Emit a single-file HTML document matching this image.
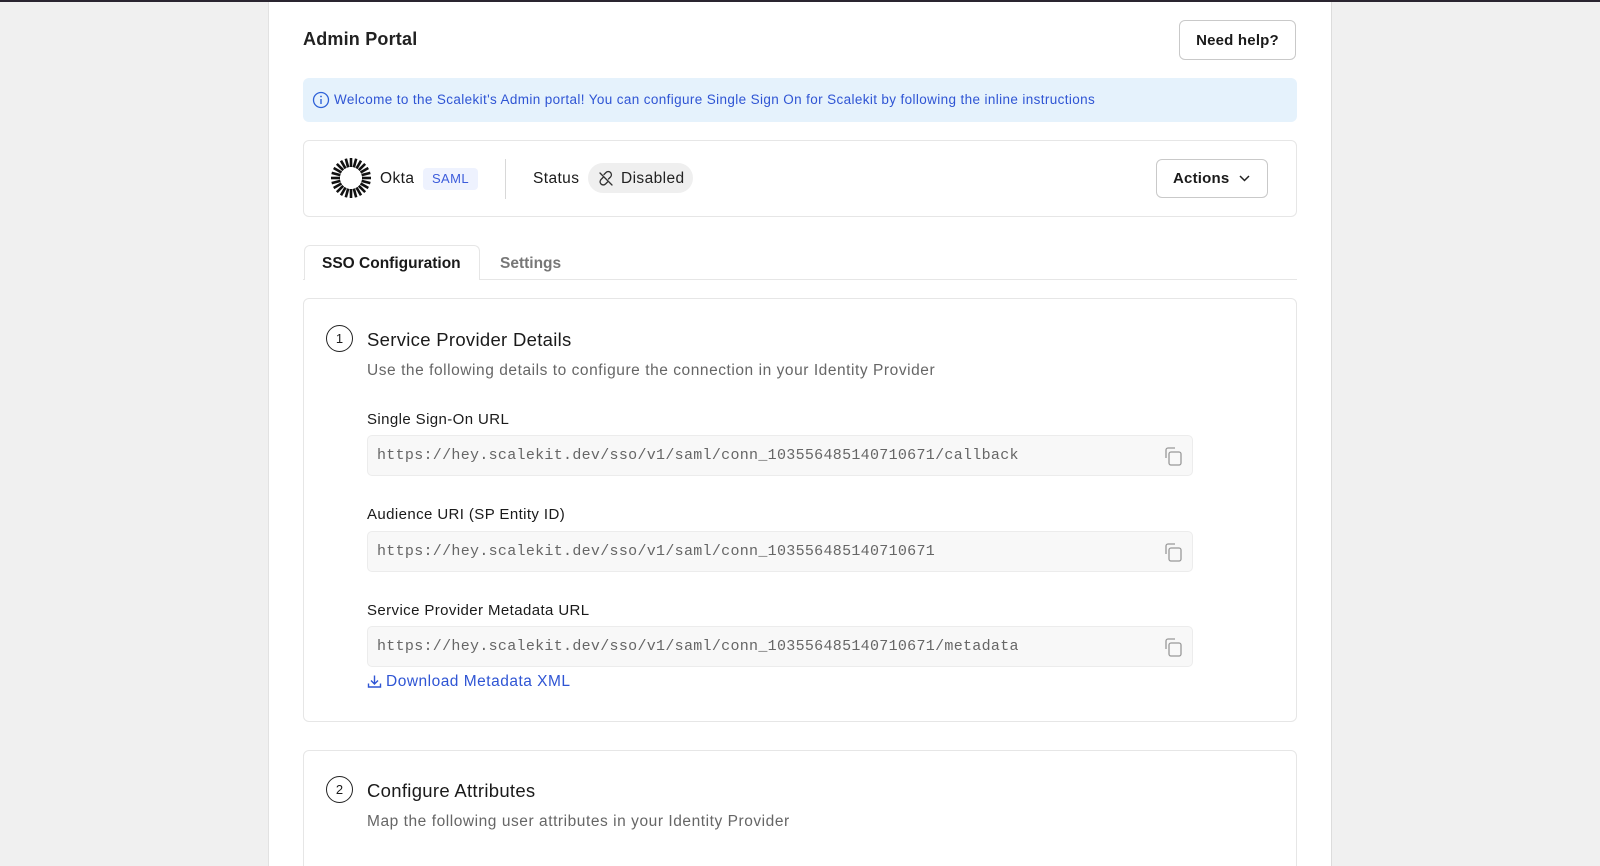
<!DOCTYPE html>
<html><head><meta charset="utf-8"><style>
*{box-sizing:border-box;margin:0;padding:0}
html,body{width:1600px;height:866px;overflow:hidden}
body{background:#f0f0f0;font-family:"Liberation Sans",sans-serif;color:#1a1a1a;position:relative}
.top{position:absolute;left:0;top:0;width:1600px;height:2px;background:#2a2530}
.panel{position:absolute;left:268px;top:2px;width:1064px;height:864px;background:#fff;border-left:1px solid #e2e2e2;border-right:1px solid #dcdcdc}
.a{position:absolute;white-space:nowrap}
.btn{position:absolute;border:1px solid #c9c9c9;border-radius:6px;background:#fff;font-weight:bold;font-size:15px;display:flex;align-items:center;justify-content:center;letter-spacing:0.2px}
.card{position:absolute;left:303px;width:994px;border:1px solid #e6e6e6;border-radius:6px;background:#fff}
.inp{position:absolute;left:367px;width:826px;height:41px;background:#f8f8f8;border:1px solid #ececec;border-radius:5px;font-family:"Liberation Mono",monospace;font-size:15px;color:#666;line-height:39px;padding-left:9px;letter-spacing:0.3px}
.lbl{position:absolute;left:367px;font-size:15px;color:#1a1a1a;letter-spacing:0.4px}
.num{position:absolute;width:27px;height:27px;border:1.3px solid #222;border-radius:50%;font-size:13px;text-align:center;line-height:25px}
.h{position:absolute;left:367px;font-size:18.5px;letter-spacing:0.3px}
.sub{position:absolute;left:367px;font-size:15.5px;color:#666;letter-spacing:0.55px}
</style></head><body>
<div class="top"></div>
<div class="panel"></div>
<div class="a" style="left:303px;top:29px;font-size:18px;font-weight:bold;color:#222;letter-spacing:0.2px">Admin Portal</div>
<div class="btn" style="left:1179px;top:20px;width:117px;height:40px">Need help?</div>
<div class="a" style="left:303px;top:78px;width:994px;height:44px;background:#e5f2fc;border-radius:6px"></div>
<svg class="a" style="left:312px;top:91px" width="18" height="18" viewBox="0 0 18 18"><circle cx="9" cy="9" r="7.5" fill="none" stroke="#2f62d8" stroke-width="1.3"/><line x1="9" y1="8" x2="9" y2="13" stroke="#2f62d8" stroke-width="1.4"/><circle cx="9" cy="5.5" r="0.9" fill="#2f62d8"/></svg>
<div class="a" style="left:334px;top:92px;font-size:13.5px;color:#2f55d4;letter-spacing:0.37px">Welcome to the Scalekit's Admin portal! You can configure Single Sign On for Scalekit by following the inline instructions</div>
<div class="card" style="top:140px;height:77px"></div>
<svg class="a" style="left:330px;top:157px" width="42" height="42" viewBox="-21 -21 42 42">
<g stroke="#111" stroke-width="2.6" stroke-linecap="butt">
<line x1="0" y1="-11" x2="0" y2="-20" transform="rotate(0)"/><line x1="0" y1="-11" x2="0" y2="-20" transform="rotate(15)"/><line x1="0" y1="-11" x2="0" y2="-20" transform="rotate(30)"/><line x1="0" y1="-11" x2="0" y2="-20" transform="rotate(45)"/><line x1="0" y1="-11" x2="0" y2="-20" transform="rotate(60)"/><line x1="0" y1="-11" x2="0" y2="-20" transform="rotate(75)"/><line x1="0" y1="-11" x2="0" y2="-20" transform="rotate(90)"/><line x1="0" y1="-11" x2="0" y2="-20" transform="rotate(105)"/><line x1="0" y1="-11" x2="0" y2="-20" transform="rotate(120)"/><line x1="0" y1="-11" x2="0" y2="-20" transform="rotate(135)"/><line x1="0" y1="-11" x2="0" y2="-20" transform="rotate(150)"/><line x1="0" y1="-11" x2="0" y2="-20" transform="rotate(165)"/><line x1="0" y1="-11" x2="0" y2="-20" transform="rotate(180)"/><line x1="0" y1="-11" x2="0" y2="-20" transform="rotate(195)"/><line x1="0" y1="-11" x2="0" y2="-20" transform="rotate(210)"/><line x1="0" y1="-11" x2="0" y2="-20" transform="rotate(225)"/><line x1="0" y1="-11" x2="0" y2="-20" transform="rotate(240)"/><line x1="0" y1="-11" x2="0" y2="-20" transform="rotate(255)"/><line x1="0" y1="-11" x2="0" y2="-20" transform="rotate(270)"/><line x1="0" y1="-11" x2="0" y2="-20" transform="rotate(285)"/><line x1="0" y1="-11" x2="0" y2="-20" transform="rotate(300)"/><line x1="0" y1="-11" x2="0" y2="-20" transform="rotate(315)"/><line x1="0" y1="-11" x2="0" y2="-20" transform="rotate(330)"/><line x1="0" y1="-11" x2="0" y2="-20" transform="rotate(345)"/>
</g></svg>
<div class="a" style="left:380px;top:170px;font-size:15.5px;letter-spacing:0.4px">Okta</div>
<div class="a" style="left:423px;top:168px;width:55px;height:22px;background:#eef2fe;border-radius:4px;color:#3b5bdb;font-size:13px;text-align:center;line-height:22px;letter-spacing:0.4px">SAML</div>
<div class="a" style="left:505px;top:159px;width:1px;height:40px;background:#d8d8d8"></div>
<div class="a" style="left:533px;top:170px;font-size:15.5px;letter-spacing:0.4px">Status</div>
<div class="a" style="left:588px;top:163px;width:105px;height:30px;background:#efefef;border-radius:15px"></div>
<svg class="a" style="left:597px;top:170px" width="18" height="17" viewBox="0 0 18 17" fill="none" stroke="#333" stroke-width="1.3" stroke-linecap="round"><path d="M7 4.5 L9 2.5 a3 3 0 0 1 4.5 4.5 L11.5 9"/><path d="M10.5 12 L8.5 14 a3 3 0 0 1 -4.5 -4.5 L6 7.5"/><line x1="3" y1="3" x2="15" y2="15"/></svg>
<div class="a" style="left:621px;top:170px;font-size:15.5px;color:#222;letter-spacing:0.4px">Disabled</div>
<div class="btn" style="left:1156px;top:159px;width:112px;height:39px;justify-content:flex-start;padding-left:16px">Actions<svg style="margin-left:10px" width="11" height="7" viewBox="0 0 11 7"><path d="M1 1 L5.5 5.5 L10 1" fill="none" stroke="#222" stroke-width="1.5"/></svg></div>
<div class="a" style="left:303px;top:279px;width:994px;height:1px;background:#e6e6e6"></div>
<div class="a" style="left:304px;top:245px;width:176px;height:35px;border:1px solid #e6e6e6;border-bottom:none;border-radius:6px 6px 0 0;background:#fff"></div>
<div class="a" style="left:322px;top:255px;font-size:15.5px;font-weight:bold;color:#1a1a1a">SSO Configuration</div>
<div class="a" style="left:500px;top:255px;font-size:15.5px;font-weight:bold;color:#777">Settings</div>
<div class="card" style="top:298px;height:424px"></div>
<div class="num" style="left:326px;top:325px">1</div>
<div class="h" style="top:329px">Service Provider Details</div>
<div class="sub" style="top:362px">Use the following details to configure the connection in your Identity Provider</div>
<div class="lbl" style="top:411px">Single Sign-On URL</div>
<div class="inp" style="top:435px">https://hey.scalekit.dev/sso/v1/saml/conn_103556485140710671/callback</div>
<div class="lbl" style="top:506px">Audience URI (SP Entity ID)</div>
<div class="inp" style="top:531px">https://hey.scalekit.dev/sso/v1/saml/conn_103556485140710671</div>
<div class="lbl" style="top:602px">Service Provider Metadata URL</div>
<div class="inp" style="top:626px">https://hey.scalekit.dev/sso/v1/saml/conn_103556485140710671/metadata</div>
<svg class="a" style="left:1162px;top:446px" width="22" height="22" viewBox="0 0 22 22" fill="none" stroke="#999" stroke-width="1.3"><path d="M4 12 V4 a2 2 0 0 1 2 -2 H13"/><rect x="7" y="6" width="12" height="13" rx="2"/></svg>
<svg class="a" style="left:1162px;top:542px" width="22" height="22" viewBox="0 0 22 22" fill="none" stroke="#999" stroke-width="1.3"><path d="M4 12 V4 a2 2 0 0 1 2 -2 H13"/><rect x="7" y="6" width="12" height="13" rx="2"/></svg>
<svg class="a" style="left:1162px;top:637px" width="22" height="22" viewBox="0 0 22 22" fill="none" stroke="#999" stroke-width="1.3"><path d="M4 12 V4 a2 2 0 0 1 2 -2 H13"/><rect x="7" y="6" width="12" height="13" rx="2"/></svg>
<svg class="a" style="left:367px;top:674px" width="15" height="15" viewBox="0 0 15 15" fill="none" stroke="#2f55d4" stroke-width="1.4"><path d="M7.5 1.5 V10 M4 6.5 L7.5 10 L11 6.5 M1.5 9.5 V13 H13.5 V9.5"/></svg>
<div class="a" style="left:386px;top:673px;font-size:15.5px;color:#2f55d4;letter-spacing:0.5px">Download Metadata XML</div>
<div class="card" style="top:750px;height:130px"></div>
<div class="num" style="left:326px;top:776px">2</div>
<div class="h" style="top:780px">Configure Attributes</div>
<div class="sub" style="top:813px">Map the following user attributes in your Identity Provider</div>
</body></html>
